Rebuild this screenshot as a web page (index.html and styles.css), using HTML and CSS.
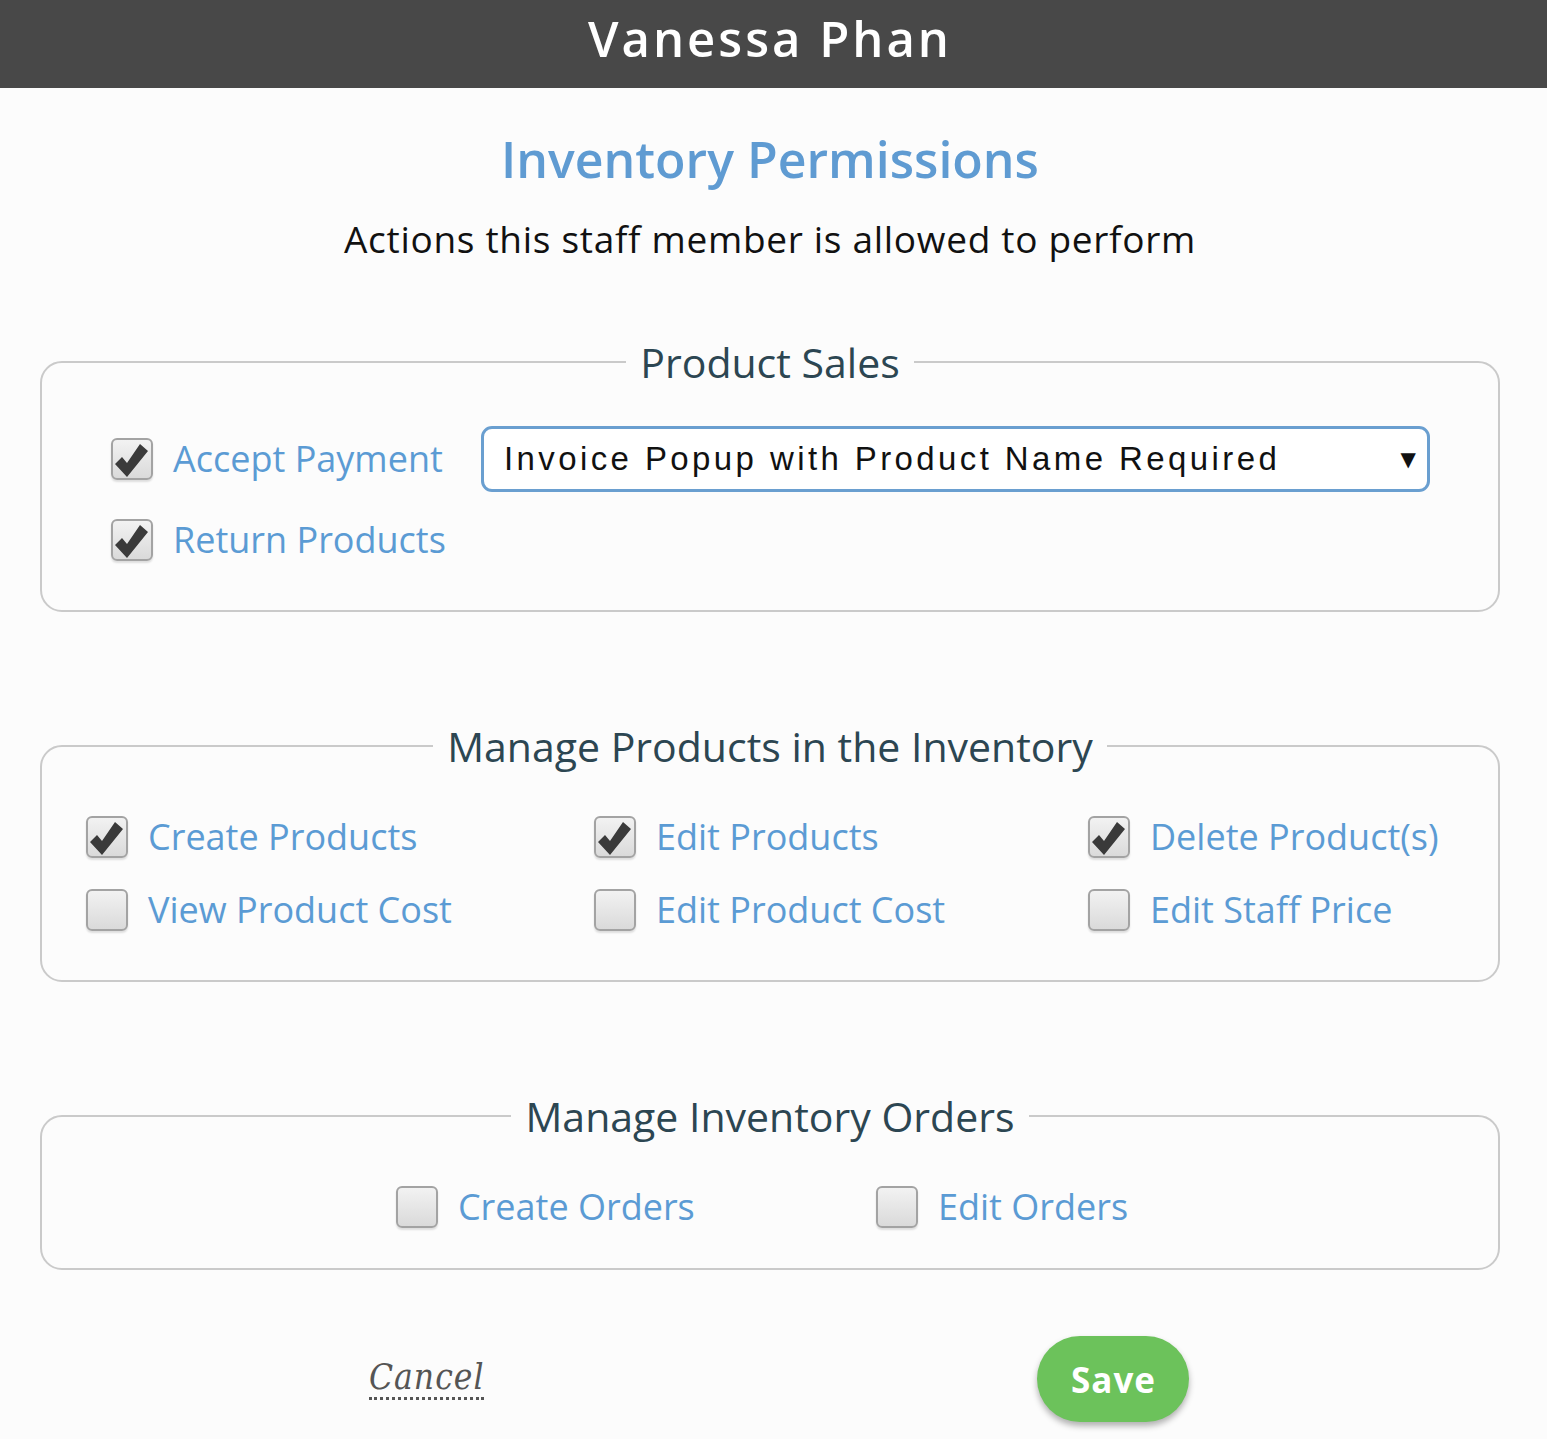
FILE: index.html
```html
<!DOCTYPE html>
<html lang="en">
<head>
<meta charset="utf-8">
<title>Inventory Permissions</title>
<link rel="stylesheet" href="styles.css">
</head>
<body>
<header class="topbar">
  <h1 class="name">Vanessa Phan</h1>
</header>
<main class="page">
  <h2 class="title">Inventory Permissions</h2>
  <p class="subtitle">Actions this staff member is allowed to perform</p>

  <fieldset class="group sales">
    <legend>Product Sales</legend>
    <div class="sales-grid">
      <label class="opt"><span class="box checked"><svg viewBox="0 0 42 42"><polygon points="4,26 11,19 16,25 29,6 37,13 16,39"/></svg></span><span class="lbl">Accept Payment</span></label>
      <div class="select"><span class="select-text">Invoice Popup with Product Name Required</span><span class="arrow">▼</span></div>
      <label class="opt"><span class="box checked"><svg viewBox="0 0 42 42"><polygon points="4,26 11,19 16,25 29,6 37,13 16,39"/></svg></span><span class="lbl">Return Products</span></label>
    </div>
  </fieldset>

  <fieldset class="group products">
    <legend>Manage Products in the Inventory</legend>
    <div class="products-grid">
      <label class="opt"><span class="box checked"><svg viewBox="0 0 42 42"><polygon points="4,26 11,19 16,25 29,6 37,13 16,39"/></svg></span><span class="lbl">Create Products</span></label>
      <label class="opt"><span class="box checked"><svg viewBox="0 0 42 42"><polygon points="4,26 11,19 16,25 29,6 37,13 16,39"/></svg></span><span class="lbl">Edit Products</span></label>
      <label class="opt"><span class="box checked"><svg viewBox="0 0 42 42"><polygon points="4,26 11,19 16,25 29,6 37,13 16,39"/></svg></span><span class="lbl">Delete Product(s)</span></label>
      <label class="opt"><span class="box"></span><span class="lbl">View Product Cost</span></label>
      <label class="opt"><span class="box"></span><span class="lbl">Edit Product Cost</span></label>
      <label class="opt"><span class="box"></span><span class="lbl">Edit Staff Price</span></label>
    </div>
  </fieldset>

  <fieldset class="group orders">
    <legend>Manage Inventory Orders</legend>
    <div class="orders-grid">
      <label class="opt"><span class="box"></span><span class="lbl">Create Orders</span></label>
      <label class="opt"><span class="box"></span><span class="lbl">Edit Orders</span></label>
    </div>
  </fieldset>

  <div class="actions">
    <a class="cancel">Cancel</a>
    <button class="save">Save</button>
  </div>
</main>
</body>
</html>
```

FILE: styles.css
```css
html, body {
  margin: 0;
  padding: 0;
  background: #fcfcfc;
}
body {
  font-family: "Open Sans", "Noto Sans", sans-serif;
  width: 1547px;
}
.topbar {
  background: #484848;
  height: 88px;
  width: 1547px;
}
.name {
  margin: 0;
  width: 1540px;
  text-align: center;
  color: #fff;
  font-family: "Open Sans", sans-serif;
  font-weight: 600;
  font-size: 49px;
  letter-spacing: 3px;
  line-height: 76px;
}
.page {
  width: 1540px;
}
.title {
  margin: 39px 0 0;
  text-align: center;
  color: #5f9bd2;
  font-weight: 600;
  font-size: 50px;
  line-height: 64px;
}
.subtitle {
  margin: 24px 0 0;
  text-align: center;
  color: #111;
  font-size: 37px;
  letter-spacing: 0.7px;
  line-height: 48px;
}
.group {
  margin: 0 40px;
  border: 2px solid #cacaca;
  border-radius: 22px;
  padding: 0;
}
.group legend {
  margin: 0 auto;
  padding: 0 14px;
  color: #2c4652;
  font-size: 41px;
  line-height: 48px;
}
.sales {
  margin-top: 75px;
}
.sales-grid {
  display: grid;
  grid-template-columns: 370px 949px;
  row-gap: 27px;
  align-items: center;
  padding: 40px 0 49px 69px;
}
.opt {
  display: flex;
  align-items: center;
  gap: 20px;
}
.box {
  box-sizing: border-box;
  width: 42px;
  height: 42px;
  border: 2px solid #a3a3a3;
  border-radius: 6px;
  background: linear-gradient(#f2f2f2, #dadada);
  box-shadow: 0 2px 2px rgba(0,0,0,0.12);
  flex: none;
  display: flex;
}
.box svg {
  width: 42px;
  height: 42px;
  margin: -2px;
  fill: #3a3a3a;
}
.lbl {
  color: #5b9bd4;
  font-size: 36px;
  letter-spacing: 0;
  line-height: 42px;
}
.select {
  box-sizing: border-box;
  height: 66px;
  border: 3px solid #6a9fd0;
  border-radius: 11px;
  background: #fff;
  display: flex;
  align-items: center;
  justify-content: space-between;
  padding: 0 11px 0 20px;
}
.select-text {
  font-family: "Liberation Sans", Arial, sans-serif;
  font-size: 33px;
  letter-spacing: 3.4px;
  color: #111;
}
.arrow {
  font-family: "DejaVu Sans", sans-serif;
  font-size: 20px;
  color: #111;
}
.products {
  margin-top: 110px;
}
.products-grid {
  display: grid;
  grid-template-columns: 508px 494px auto;
  row-gap: 31px;
  padding: 46px 0 49px 44px;
}
.orders {
  margin-top: 110px;
}
.orders-grid {
  display: grid;
  grid-template-columns: 480px auto;
  justify-content: center;
  padding: 46px 16px 40px 0;
}
.actions {
  display: flex;
  align-items: center;
  padding: 66px 0 20px 369px;
}
.cancel {
  font-family: "DejaVu Serif", "Liberation Serif", serif;
  font-style: italic;
  font-stretch: condensed;
  font-size: 35px;
  color: #555;
  letter-spacing: 1px;
  border-bottom: 3px dotted #555;
  line-height: 36px;
  padding-bottom: 2px;
}
.save {
  margin-left: 553px;
  width: 152px;
  height: 86px;
  border: none;
  border-radius: 43px;
  background: #6cc25b;
  color: #fff;
  font-family: "Open Sans", sans-serif;
  font-weight: 700;
  font-size: 35px;
  letter-spacing: 1px;
  box-shadow: 0 4px 6px rgba(0,0,0,0.3);
}
```
